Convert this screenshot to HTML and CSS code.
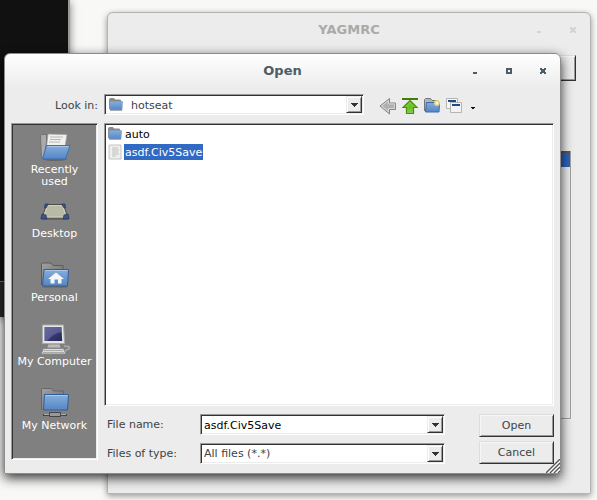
FILE: index.html
```html
<!DOCTYPE html>
<html lang="en">
<head>
<meta charset="utf-8">
<title>Open</title>
<link rel="stylesheet" href="styles.css">
</head>
<body>
<svg class="defs" aria-hidden="true">
  <defs>
    <linearGradient id="blue" x1="0" y1="0" x2="0" y2="1"><stop offset="0" stop-color="#86aedb"/><stop offset="1" stop-color="#5585c4"/></linearGradient>
    <linearGradient id="grey" x1="0" y1="0" x2="1" y2="1"><stop offset="0" stop-color="#a2a2a0"/><stop offset="1" stop-color="#666"/></linearGradient>
    <linearGradient id="screen" x1="0" y1="0" x2="1" y2="1"><stop offset="0" stop-color="#4c4f8c"/><stop offset="1" stop-color="#25285c"/></linearGradient>
    <radialGradient id="green"><stop offset="0" stop-color="#5fc40a"/><stop offset="1" stop-color="#8fc662"/></radialGradient>
    <symbol id="folder" viewBox="0 0 16 16">
      <path d="M1.500 12V2.500q0-1 1-1h3.500l1 1.500h5.500v3" fill="#888a85" stroke="#888"/>
      <path d="M2 4.500h12.500l-.5 8q0 .5-.5.500h-11q-.5 0-.5-.5z" fill="url(#blue)" stroke="#7d9fc8" stroke-width=".7"/>
      <path d="M2 13.500h12" stroke="#777" stroke-opacity=".5"/>
    </symbol>
    <symbol id="caret" viewBox="0 0 7 4"><path d="M0 0h7v1H6v1H5v1H4v1H3V3H2V2H1V1H0z" fill="#2e3436"/></symbol>
  </defs>
</svg>

<div class="terminal"><div class="terminal-foot"></div></div>

<section class="window parent" aria-label="YAGMRC">
  <header class="titlebar">
    <h2>YAGMRC</h2>
    <div class="controls">
      <svg viewBox="0 0 6 6"><path d="M1 4h4v2H1z"/></svg>
      <svg viewBox="0 0 6 6"><path d="M0 0h2v1h2V0h2v2H5v2h1v2H4V5H2v1H0V4h1V2H0z"/></svg>
    </div>
  </header>
  <div class="parent-body">
    <button class="push parent-button" type="button" aria-label="Browse"></button>
    <div class="parent-group"><div class="parent-field"></div></div>
  </div>
</section>

<section class="window dialog" role="dialog" aria-labelledby="title">
  <header class="titlebar">
    <h1 id="title">Open</h1>
    <div class="controls">
      <button type="button" aria-label="Minimize"><svg viewBox="0 0 6 6"><path d="M1 4h4v2H1z"/></svg></button>
      <button type="button" aria-label="Maximize"><svg viewBox="0 0 6 6"><path d="M0 0h6v6H0zM2 2v2h2V2z" fill-rule="evenodd"/></svg></button>
      <button type="button" aria-label="Close"><svg viewBox="0 0 6 6"><path d="M0 0h2v1h2V0h2v2H5v2h1v2H4V5H2v1H0V4h1V2H0z"/></svg></button>
    </div>
  </header>

  <form class="content">
    <label class="look-label" for="look">Look in:</label>
    <div class="look-row">
      <div class="sunken combo look-combo">
        <svg class="icon16"><use href="#folder"/></svg>
        <select id="look"><option>hotseat</option></select>
        <span class="drop"><svg><use href="#caret"/></svg></span>
      </div>
      <div class="tools">
        <button type="button" aria-label="Back">
          <svg viewBox="0 0 18 18"><path d="M1 9l9.500-7.500v4.500h6v6.500h-6v4.500z" fill="#c8c8c8" stroke="#858585"/><path d="M2.800 9l6.700-5.300v3.300h6v4.500h-6v3.300z" fill="#b0b0b0" stroke="#ddd" stroke-width=".8"/></svg>
        </button>
        <button type="button" aria-label="Up one level">
          <svg viewBox="0 0 18 18"><path d="M1 1h16v2H1z" fill="#3f7f06"/><path d="M9 3.500l7 7h-3.500v6h-7v-6H2z" fill="url(#green)" stroke="#4a8d0a" stroke-width="1.200"/></svg>
        </button>
        <button type="button" aria-label="New folder">
          <svg viewBox="0 0 18 18"><path d="M1.500 14V2.500l1-1h5l1.500 2h6V8" fill="#b5b5b2" stroke="#777"/><path d="M3.500 5.500h13l-.5 9.500H2.500z" fill="url(#blue)" stroke="#3b6cae"/><circle cx="14" cy="6" r="3" fill="#f5e56b" fill-opacity=".8"/><circle cx="14" cy="6" r="1.500" fill="#fff9c0"/></svg>
        </button>
        <button type="button" aria-label="View">
          <svg viewBox="0 0 18 18"><path d="M1.500 1.500h11v10h-11z" fill="#f8f8f8" stroke="#b4b6b0"/><path d="M3 3h8v2H3z" fill="#204a87"/><path d="M5.500 5.500h11v10h-11z" fill="#f2f2f2" stroke="#b4b6b0"/><path d="M7 7h8v2H7z" fill="#204a87"/></svg>
        </button>
        <button class="view-menu" type="button" aria-label="View options"><svg viewBox="0 0 4 2"><path d="M0 0h4v1H3v1H1V1H0z" fill="#111"/></svg></button>
      </div>
    </div>

    <nav class="sunken places" aria-label="Places">
      <button type="button">
        <svg viewBox="0 0 32 32">
          <ellipse cx="16" cy="27" rx="12" ry="2" fill="#555" opacity=".6"/>
          <path d="M1.500 4l1-1.500h5v6L5.500 26l-3-1z" fill="#aaa" stroke="#666" stroke-width=".7"/>
          <path d="M9 2l19 .5-2 13-19 4z" fill="#f0f0ef" stroke="#999" stroke-width=".7"/>
          <path d="M11 5h13M11 7.500h11M10 10h11" stroke="#b8b8b8"/>
          <path d="M7.500 13.500H31L26.500 27H3.500z" fill="url(#blue)" stroke="#3c6fb0"/>
          <path d="M8.500 14.500h21" stroke="#a5c5ea"/>
        </svg>
        Recently<br>used
      </button>
      <button type="button">
        <svg viewBox="0 0 32 32">
          <path d="M4 22.500h25v1.500H4z" fill="#555" opacity=".6"/>
          <path d="M7.500 8.500h17l4.500 13.500h-26z" fill="#b9baa5" stroke="#4b4d44"/>
          <path d="M8.500 9.500h15l3.800 11.500H4.700z" fill="none" stroke="#d0d1c0"/>
          <path d="M6 8h3.500L7 12H5.500zM22.500 8H26l.5 4H25zM2 22l1-4 4 1 1 4H2zM30 22l-1-4-4 1-1 4h6z" fill="#3d5489" stroke="#293556" stroke-width=".7"/>
        </svg>
        Desktop
      </button>
      <button type="button">
        <svg viewBox="0 0 32 32">
          <path d="M2.500 25V4q0-1 1-1h8.500l2 2.500h10V14" fill="url(#grey)" stroke="#5c5c5c"/>
          <path d="M5 9.500h24.500L28.500 26H3.500z" fill="url(#blue)" stroke="#2f5e9f"/>
          <path d="M6 10.500h22.500" stroke="#a9c8eb"/>
          <path d="M17 12.500l8 6.500h-2.500v4.500H19v-4h-3.500v4H11.500v-4.500H9z" fill="#f5f7fa"/>
          <path d="M4 27h24" stroke="#555" opacity=".7"/>
        </svg>
        Personal
      </button>
      <button type="button">
        <svg viewBox="0 0 32 32">
          <path d="M25 22q7 0 5 3-4 1-4 3" fill="none" stroke="#aaa" stroke-width="1.500"/>
          <path d="M9 20h12l1 4H8z" fill="#bbb" stroke="#777" stroke-width=".7"/>
          <path d="M3.500 1h21l1 18.500h-22z" fill="#e6e6e2" stroke="#aaa"/>
          <path d="M5.500 3h17l.7 14H5.500z" fill="url(#screen)"/>
          <path d="M5.500 3h17l.2 5Q14 9 8 17H5.500z" fill="#8587b5" opacity=".45"/>
          <path d="M4.500 24.500h20l2.500 5.500H2z" fill="#ddd" stroke="#888"/>
          <path d="M5 26.500h19M4 28.500h21" stroke="#aaa"/>
        </svg>
        My Computer
      </button>
      <button type="button">
        <svg viewBox="0 0 32 32">
          <path d="M2.500 22V1.500q0-1 1-1h9l2 2.500h10V8" fill="url(#grey)" stroke="#666"/>
          <path d="M5.500 6.500h24L28.500 22H4.500z" fill="url(#blue)" stroke="#2f5e9f"/>
          <path d="M6.500 7.500h22" stroke="#a9c8eb"/>
          <path d="M4 27h24" stroke="#444" stroke-width="2"/><path d="M5 26.500h22" stroke="#aaa"/>
          <path d="M10.500 24.500h11v4h-11z" fill="#999" stroke="#444"/>
        </svg>
        My Network
      </button>
    </nav>

    <ul class="sunken files">
      <li><svg class="icon16"><use href="#folder"/></svg><span>auto</span></li>
      <li class="selected"><svg class="icon16" viewBox="0 0 16 16"><path d="M2 1h12v14H2z" fill="#efefed" stroke="#c4c4c0"/><path d="M5 4h6M5 6h7M5 8h6M5 10h7M5 12h4" stroke="#c0c0c0"/></svg><span>asdf.Civ5Save</span></li>
    </ul>

    <div class="footer">
      <div class="fields">
        <label for="name">File name:</label>
        <div class="sunken combo">
          <input id="name" type="text" value="asdf.Civ5Save" autocomplete="off" spellcheck="false">
          <span class="drop"><svg><use href="#caret"/></svg></span>
        </div>
        <label for="type">Files of type:</label>
        <div class="sunken combo">
          <select id="type"><option>All files (*.*)</option></select>
          <span class="drop"><svg><use href="#caret"/></svg></span>
        </div>
      </div>
      <div class="actions">
        <button class="push" type="submit">Open</button>
        <button class="push" type="button">Cancel</button>
      </div>
    </div>
  </form>
  <svg class="grip" viewBox="0 0 14 14" aria-hidden="true"><path d="M0 14L14 0M4 14L14 4M8 14l6-6M12 14l2-2" stroke="#555" stroke-width="1.300"/><path d="M2 14L14 2M6 14l8-8M10 14l4-4" stroke="#fff"/></svg>
</section>
</body>
</html>
```
FILE: styles.css
```css
* {
  box-sizing: border-box;
}

html {
  height: 100%;
}

body {
  position: relative;
  height: 100%;
  margin: 0;
  overflow: hidden;
  background: #f8f8f6;
  color: #3b4447;
  font: 11px/12px "DejaVu Sans", sans-serif;
}

button,
input,
select {
  margin: 0;
  padding: 0;
  border: 0;
  border-radius: 0;
  outline: 0;
  background: none;
  color: inherit;
  font: inherit;
  appearance: none;
}

svg {
  display: block;
}

.defs {
  position: absolute;
  width: 0;
  height: 0;
}

/* Windows on the desktop */

.terminal {
  position: absolute;
  top: 0;
  left: 0;
  display: flex;
  flex-direction: column;
  justify-content: flex-end;
  width: 70px;
  height: 317px;
  border-right: 2px solid #999;
  background: #111;
  box-shadow: 0 2px 8px rgba(0, 0, 0, 0.5);
}

.terminal-foot {
  height: 36px;
  border-top: 1px solid #777;
  background: #2a2a2a;
}

.window {
  position: absolute;
  border: 1px solid #b4b4b2;
  border-radius: 6px 6px 1px 1px;
  background: #ececec;
}

.parent {
  top: 12px;
  right: 6px;
  bottom: 6px;
  left: 107px;
  box-shadow: 0 2px 6px rgba(0, 0, 0, 0.4);
}

.dialog {
  top: 53px;
  right: 36px;
  bottom: 26px;
  left: 4px;
  display: flex;
  flex-direction: column;
  border-color: #8c8c8c;
  background: linear-gradient(#fff, #ececec 34px);
  box-shadow: 0 4px 12px rgba(0, 0, 0, 0.8);
}

.titlebar {
  display: grid;
  grid-template-columns: 1fr auto 1fr;
  align-items: center;
  height: 34px;
  padding-right: 14px;
  color: #4b5d66;
}

.titlebar h1,
.titlebar h2 {
  grid-column: 2;
  margin: 0;
  padding-left: 14px;
  font-size: 13px;
  line-height: 16px;
}

.controls {
  display: flex;
  justify-content: flex-end;
  gap: 28px;
}

.controls svg {
  width: 6px;
  height: 6px;
  fill: currentColor;
}

.parent .titlebar {
  color: #a9aba8;
}

.parent .controls {
  color: #d4d4d4;
}

.parent-body {
  display: flex;
  flex-direction: column;
  align-items: flex-end;
  gap: 70px;
  padding: 8px 14px;
}

.parent-button {
  width: 75px;
  height: 26px;
}

.parent-group {
  width: 200px;
  height: 269px;
  margin-right: 4px;
  border: 2px groove #f4f4f4;
  border-width: 0 2px 2px 0;
}

.parent-field {
  height: 16px;
  border-top: 2px solid #555;
  background: #2f62ba;
}

/* Dialog */

.content {
  display: grid;
  flex: 1;
  grid-template-columns: 87px 1fr;
  grid-template-rows: 21px 1fr 50px;
  gap: 8px 6px;
  padding: 6px 6px 9px;
}

.sunken {
  border: 1px solid;
  border-color: #9a9a9a #fff #fff #9a9a9a;
  background: #fff;
  box-shadow: inset 1px 1px #333, inset -1px -1px #ececec;
}

.look-label {
  align-self: center;
  justify-self: end;
  padding-top: 3px;
}

.look-row {
  display: flex;
  gap: 16px;
}

.combo {
  display: flex;
  align-items: center;
  padding: 1px;
}

.look-combo {
  flex: 1;
}

.combo input,
.combo select {
  flex: 1;
  width: 0;
  height: 17px;
  padding: 0 2px;
}

.combo input {
  padding-top: 2px;
  color: #000;
}

.look-combo select {
  padding: 2px 0 0 7px;
}

.icon16 {
  flex: none;
  width: 16px;
  height: 16px;
}

.look-combo .icon16 {
  margin-left: 2px;
}

.drop {
  display: flex;
  align-items: center;
  justify-content: center;
  width: 16px;
  height: 17px;
  border: 1px solid;
  border-color: #ececec #333 #333 #ececec;
  background: #ececec;
  box-shadow: inset 1px 1px #fff, inset -1px -1px #999;
  pointer-events: none;
}

.drop svg {
  width: 7px;
  height: 4px;
}

.tools {
  display: flex;
  align-items: center;
  gap: 4px;
  padding: 2px 78px 0 0;
}

.look-row .tools {
  margin-left: -1px;
  padding-right: 79px;
}

.tools svg {
  width: 18px;
  height: 18px;
}

.view-menu {
  padding: 4px 0 0 4px;
}

.tools .view-menu svg {
  width: 4px;
  height: 2px;
}

.places {
  display: flex;
  flex-direction: column;
  grid-row: 2 / 4;
  margin-bottom: 4px;
  padding-top: 1px;
  background: #808080;
  color: #fff;
}

.places button {
  display: flex;
  flex: none;
  flex-direction: column;
  align-items: center;
  height: 64px;
  padding-top: 7px;
}

.places svg {
  width: 32px;
  height: 32px;
}

.files {
  margin: 0;
  padding: 1px 2px;
  list-style: none;
  color: #000;
}

.files li {
  display: flex;
  align-items: center;
  height: 18px;
}

.files span {
  margin-left: 1px;
  padding: 3px 1px 1px;
}

.files .selected span {
  background: #316ac5;
  color: #fff;
}

.footer {
  display: flex;
  gap: 34px;
  padding-left: 3px;
}

.fields {
  display: grid;
  flex: 1;
  grid-template-columns: 93px 1fr;
  grid-template-rows: 21px 21px;
  gap: 8px 0;
}

.fields label {
  align-self: center;
}

.actions {
  display: grid;
  grid-template-rows: 23px 23px;
  gap: 4px;
  width: 75px;
}

.push {
  border: 1px solid;
  border-color: #ddd #333 #333 #ddd;
  background: #ececec;
  box-shadow: inset 1px 1px #f6f6f6, inset -1px -1px #999;
  text-align: center;
}

.grip {
  position: absolute;
  right: 0;
  bottom: 0;
  width: 14px;
  height: 14px;
}
```
